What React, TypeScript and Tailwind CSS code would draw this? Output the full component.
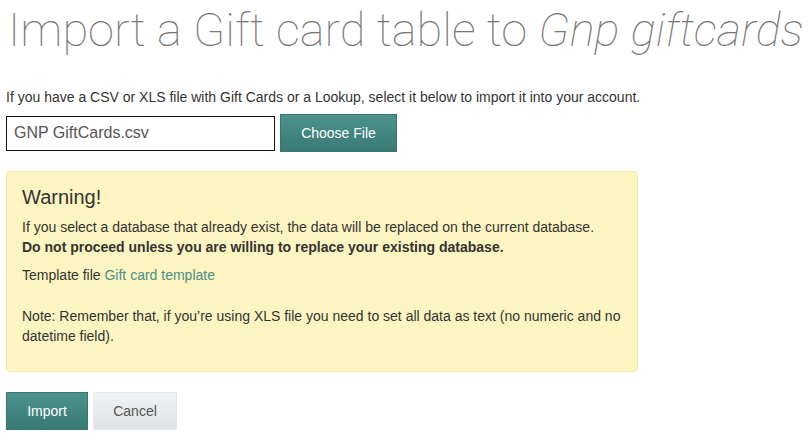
import React from "react";

export default function App() {
  return (
    <div className="bg-white min-h-screen px-[6px] font-['Liberation_Sans',Arial,sans-serif] text-[14px] text-[#333]">
      {/* Title */}
      <h1 className="pt-[5px] pl-[2px] font-['Roboto',sans-serif] font-thin text-[47px] leading-[49px] text-[#777] whitespace-nowrap">
        Import a Gift card table to <em>Gnp giftcards</em>
      </h1>

      <p className="mt-[33px] leading-[20px]">
        If you have a CSV or XLS file with Gift Cards or a Lookup, select it below to import it into your account.
      </p>

      {/* File picker */}
      <div className="mt-[7px] flex items-center gap-[5px]">
        <div className="w-[269px] h-[35px] border border-[#111] flex items-center px-[7px] text-[16px] text-[#555]">
          GNP GiftCards.csv
        </div>
        <button className="w-[117px] h-[38px] bg-gradient-to-b from-[#4b928b] to-[#3a7a74] border border-[#3a7670] text-white text-[14px]">
          Choose File
        </button>
      </div>

      {/* Warning */}
      <div className="mt-[19px] w-[632px] bg-[#fdf5c1] border border-[#f6e8a8] rounded-[4px] pl-[15px] pr-[15px] pt-[13px] pb-[25px]">
        <h4 className="text-[20px] leading-[24px] text-[#333]">Warning!</h4>
        <p className="mt-[8px] leading-[20px]">
          If you select a database that already exist, the data will be replaced on the current database.
          <br />
          <b>Do not proceed unless you are willing to replace your existing database.</b>
        </p>
        <p className="mt-[8px] leading-[20px]">
          Template file <a className="text-[#4a9089]">Gift card template</a>
        </p>
        <p className="mt-[21px] leading-[20px]">
          Note: Remember that, if you&rsquo;re using XLS file you need to set all data as text (no numeric and no datetime field).
        </p>
      </div>

      {/* Actions */}
      <div className="mt-[20px] flex gap-[5px]">
        <button className="w-[82px] h-[38px] bg-gradient-to-b from-[#4b928b] to-[#3a7a74] border border-[#3a7670] text-white text-[14px]">
          Import
        </button>
        <button className="w-[84px] h-[38px] bg-gradient-to-b from-[#f0f2f3] to-[#dfe3e5] border border-[#e6e8e9] text-[#555] text-[14px]">
          Cancel
        </button>
      </div>
    </div>
  );
}
